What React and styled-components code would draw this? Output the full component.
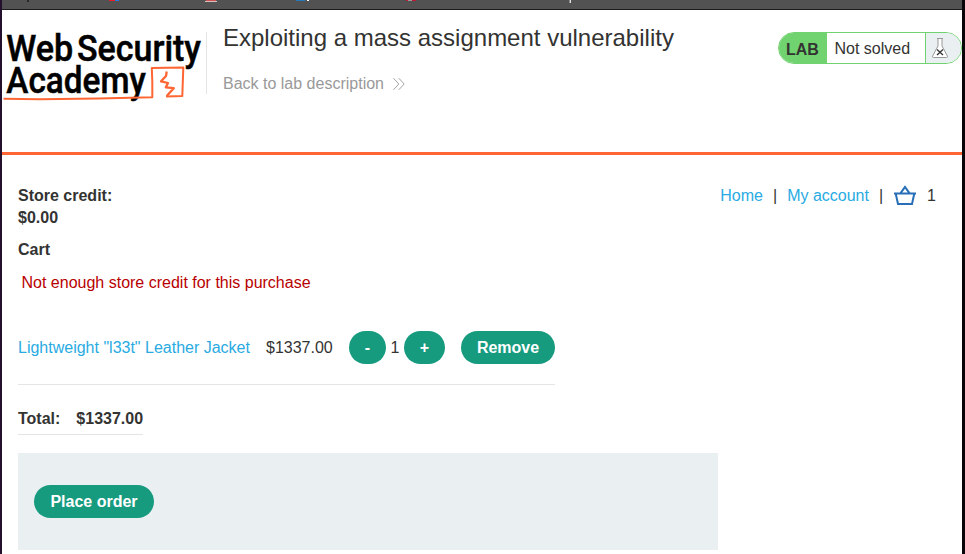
import React from "react";
import styled, { createGlobalStyle } from "styled-components";

const GlobalStyle = createGlobalStyle`
  * { box-sizing: border-box; }
  body {
    margin: 0;
    overflow: hidden;
    background: #000;
    color: #333332;
    font: 16px/22px "Liberation Sans", Arial, sans-serif;
  }
`;

const Frame = styled.div`
  display: flex;
  flex-direction: column;
  width: 965px;
  height: 554px;
  overflow: hidden;
  border-style: solid;
  border-color: #0a0508;
  border-width: 0 3px 0 2px;
  border-left-color: #24102c;
  background: #fff;
`;

const BookmarksBar = styled.div`
  flex: none;
  height: 10px;
  background: #525252;
  border-bottom: 1px solid #1c1c1c;
`;

const BookmarkEdges = styled.svg`
  display: block;
`;

const Header = styled.header`
  display: flex;
  flex: none;
  align-items: flex-start;
  height: 145px;
  padding-top: 22px;
  border-bottom: 3px solid #ff6633;
`;

const Logo = styled.svg`
  flex: none;
  display: block;
  width: 204px;
  height: 72px;
  overflow: visible;
`;

const Titles = styled.div`
  flex: 1;
  height: 62px;
  padding-left: 16px;
  border-left: 1px solid #e5e5e5;
`;

const Title = styled.h1`
  margin: -9px 0 0;
  font-size: 24px;
  line-height: 30px;
  font-weight: 400;
`;

const BackLink = styled.a`
  display: flex;
  align-items: center;
  gap: 9px;
  margin-top: 20px;
  color: #999;
`;

const LabStatus = styled.div`
  display: flex;
  flex: none;
  width: 184px;
  height: 32px;
  overflow: hidden;
  border: 1px solid #71d36f;
  border-radius: 16px;
  line-height: 32px;
`;

const LabTag = styled.span`
  width: 48px;
  padding-left: 7px;
  background: #71d36f;
  font-weight: 700;
  line-height: 34px;
`;

const LabState = styled.span`
  width: 99px;
  padding-left: 7.5px;
  line-height: 31px;
  border-right: 1px solid #71d36f;
`;

const LabFlask = styled.span`
  flex: 1;
  padding: 4px 0 0 5px;
  background: #eaeff2;
`;

const Icon = styled.svg`
  display: block;
  flex: none;
`;

const Main = styled.main`
  display: flex;
  flex: 1;
  flex-direction: column;
  align-items: flex-start;
  padding: 30px 26px 0 16px;
`;

const TopRow = styled.div`
  display: flex;
  align-self: stretch;
  justify-content: space-between;
`;

const StrongText = styled.strong`
  display: block;
`;

const Nav = styled.nav`
  display: flex;
  align-items: center;
  gap: 10px;
  height: 22px;
`;

const Link = styled.a`
  color: #29abe2;
`;

const CartHeading = styled.h2`
  margin: 10px 0 0;
  font-size: 16px;
  line-height: 22px;
`;

const ErrorText = styled.p`
  margin: 11px 0 0 3.5px;
  color: #b80000;
`;

const CartRow = styled.div`
  display: flex;
  align-items: center;
  width: 537px;
  height: 74px;
  margin-top: 17px;
  border-bottom: 1px solid #e5e5e5;
`;

const Price = styled.span`
  width: 83px;
  padding-left: 16px;
`;

const ItemName = styled(Link)`
  width: 232px;
  white-space: nowrap;
`;

const Quantity = styled.div`
  display: flex;
  align-items: center;
  gap: 4.5px;
  width: 96px;
  margin: 0 16px;
`;

const Button = styled.button`
  flex: none;
  width: ${({ $width }) => $width}px;
  height: 33px;
  padding: 0;
  border: 0;
  border-radius: 17px;
  background: #169b7f;
  color: #fff;
  font: 700 16px/33px "Liberation Sans", Arial, sans-serif;
`;

const TotalRow = styled.div`
  display: flex;
  gap: 16px;
  height: 33px;
  margin-top: 17px;
  padding-top: 6px;
  padding-bottom: 5px;
  border-bottom: 1px solid #e5e5e5;
  font-weight: 700;
`;

const OrderPanel = styled.section`
  flex: none;
  width: 700px;
  height: 97px;
  margin-top: 18px;
  padding: 32px 16px;
  background: #eaeff2;
`;

const AcademyLogo = () => (
  <Logo viewBox="2 32 204 72" role="img" aria-label="Web Security Academy">
    <g
      fontFamily="Roboto, sans-serif"
      fontWeight="500"
      fontSize="37.5"
      fill="#000"
      stroke="#000"
      strokeWidth="0.5"
    >
      <text x="6.3" y="60.7" textLength="67" lengthAdjust="spacingAndGlyphs">Web</text>
      <text x="77" y="60.7" textLength="124" lengthAdjust="spacingAndGlyphs">Security</text>
      <text x="6.3" y="93" textLength="139.5" lengthAdjust="spacingAndGlyphs">Academy</text>
    </g>
    <g fill="none" stroke="#ff6633" strokeLinejoin="round">
      <path strokeWidth="2" d="M3.5 98.7 L40 99.3 L98 98.6 L152.3 97.3 V82 L151.8 68 L183.3 67.6 L182.3 96 L166 96.6" />
      <path strokeWidth="2.3" d="M166.7 71.5 L166 76 L161 81.3 L168 83 L165.8 87.3 L173.8 88.2 L166.7 96" />
    </g>
  </Logo>
);

export default function App() {
  return (
    <>
      <GlobalStyle />
      <Frame>
        <BookmarksBar>
          <BookmarkEdges width="960" height="4" viewBox="2 0 960 4" shapeRendering="crispEdges">
            <path fill="#292929" d="M27 0h2v2h-2z" />
            <path fill="#ed1c24" d="M109 0h6v1h-6z" />
            <path fill="#2879e4" d="M115 0h4v1h-4z" />
            <path fill="#cd5050" d="M206 0h10v1h-10z" />
            <path fill="#d5bfc0" d="M205 1h12v1h-12z" />
            <path fill="#2479bd" d="M296 0h9v1h-9z" />
            <path fill="#fff" d="M307 0h2v1h-2z" />
            <path fill="#bd1736" d="M406 0h2v1h-2zM412 0h4v1h-4z" />
            <path fill="#999" d="M408 0h4v1h-4z" />
            <path fill="#dedede" d="M570 0h1v3h-1z" />
            <path fill="#8c8c8c" d="M569 0h1v3h-1z" />
          </BookmarkEdges>
        </BookmarksBar>
        <Header>
          <AcademyLogo />
          <Titles>
            <Title>Exploiting a mass assignment vulnerability</Title>
            <BackLink>
              Back to lab description
              <Icon width="12" height="14" viewBox="0 0 12 14" fill="none" stroke="#999" strokeWidth="0.9">
                <path d="M.5 1.2 5.8 7 .5 12.8M5.8 1.2 11.2 7 5.8 12.8" />
              </Icon>
            </BackLink>
          </Titles>
          <LabStatus>
            <LabTag>LAB</LabTag>
            <LabState>Not solved</LabState>
            <LabFlask>
              <Icon width="18" height="22" viewBox="0 0 18 22" fill="none">
                <path fill="#fff" stroke="#999" d="M6 1.5h6M7 2v7L1.5 19.2Q1.2 20.5 2.5 20.5h13Q16.8 20.5 16.5 19.2L11 9V2" />
                <path stroke="#333" strokeWidth="1.3" d="m6 12.5 6 5.5m0-5.5L6 18" />
              </Icon>
            </LabFlask>
          </LabStatus>
        </Header>
        <Main>
          <TopRow>
            <div>
              <StrongText>Store credit:</StrongText>
              <StrongText>$0.00</StrongText>
            </div>
            <Nav>
              <Link>Home</Link>
              <span>|</span>
              <Link>My account</Link>
              <span>|</span>
              <Icon width="24" height="22" viewBox="0 0 24 22" fill="none" stroke="#286fb7" strokeWidth="2">
                <path d="M1 8.6H23M2.8 9 5 19H19L21.2 9M7.4 8.3 12 2l4.6 6.3" />
              </Icon>
              <span>1</span>
            </Nav>
          </TopRow>
          <CartHeading>Cart</CartHeading>
          <ErrorText>Not enough store credit for this purchase</ErrorText>
          <CartRow>
            <ItemName>Lightweight "l33t" Leather Jacket</ItemName>
            <Price>$1337.00</Price>
            <Quantity>
              <Button $width={37}>-</Button>
              <span>1</span>
              <Button $width={41}>+</Button>
            </Quantity>
            <Button $width={94}>Remove</Button>
          </CartRow>
          <TotalRow>
            <span>Total:</span>
            <span>$1337.00</span>
          </TotalRow>
          <OrderPanel>
            <Button $width={120}>Place order</Button>
          </OrderPanel>
        </Main>
      </Frame>
    </>
  );
}
